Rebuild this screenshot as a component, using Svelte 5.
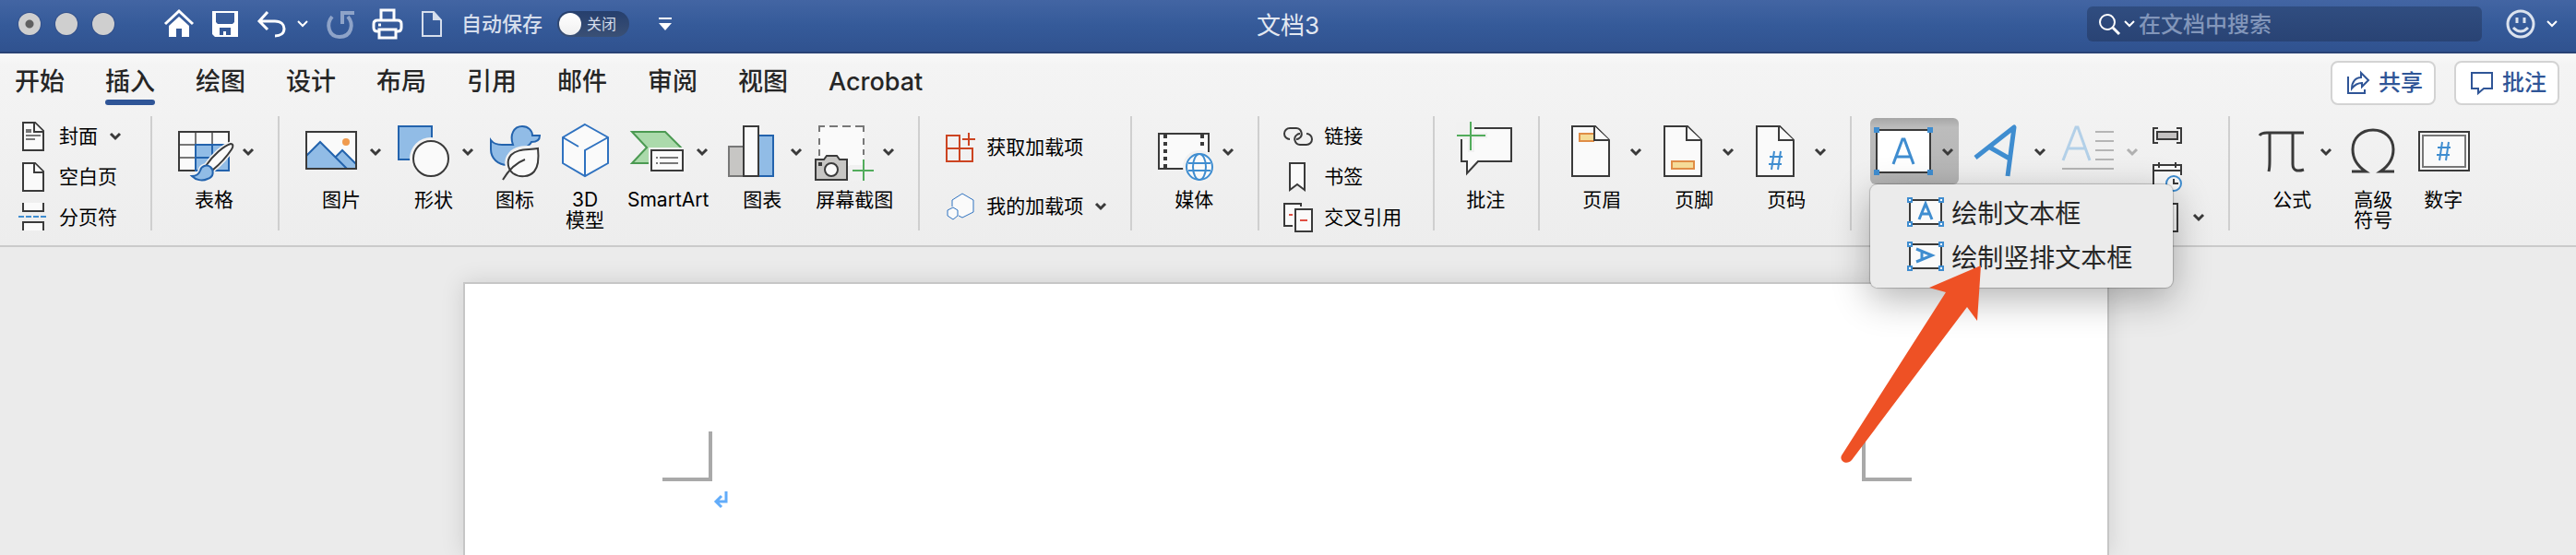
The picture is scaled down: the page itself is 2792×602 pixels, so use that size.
<script module lang="ts">
	type IconName = keyof typeof ICONS;

	interface Command {
		icon: IconName;
		/** One entry per line of the caption. */
		label: string[];
		menu?: boolean;
	}

	interface Group {
		kind: 'large' | 'rows';
		items: Command[];
	}

	const PAGE = '<path class="k w" d="M5 1H18L27 10V31H5Z"/><path class="k w" d="M17 1V11H27"/>';
	const SHEET =
		'<path class="k w" d="M11 3H36L51 18V57H11Z"/><path class="k w" d="M35 3V18H51"/>';

	/* Large icons are drawn on a 64x62 grid, small ones on 32x32. */
	const ICONS = {
		cover: `${PAGE}<path fill="#777" d="M8 8h6v4H8z"/><path class="g" d="M8 15H24M8 19H18"/>`,
		blank: PAGE,
		pagebreak:
			'<path class="k w" d="M5 0V9H27V0M5 30V21H27V30"/><path d="M0 15H30" stroke="#3f8dd0" stroke-width="2" stroke-dasharray="6 2"/>',
		table:
			'<path class="k w" d="M5 9H59V51H5Z"/><path class="g" d="M23 10V50M41 10V50M6 23H58M6 37H58"/><path class="b bf" d="M23 23H59V51H23ZM41 23V51M23 37H59"/>' +
			'<path class="halo" d="M34 46C42 34 54 24 61 22C64 22 64 25 62 28C56 37 48 45 42 50ZM19 57C25 57 27 54 28 51C29 46 35 44 39 47C43 51 43 58 36 60C30 63 23 61 19 57Z"/>' +
			'<path class="k w" d="M34 46C42 34 54 24 61 22C64 22 64 25 62 28C56 37 48 45 42 50Z"/><path class="b bf" d="M19 57C25 57 27 54 28 51C29 46 35 44 39 47C43 51 43 58 36 60C30 63 23 61 19 57Z"/>',
		picture:
			'<path class="w" d="M5 9H59V49H5Z"/><path class="bf" d="M5 35L20 20L37 36L44 30L59 44V49H5Z"/><path class="b" d="M5 35L20 20L49 49M37 36L44 29L59 44"/><circle cx="48" cy="20" r="4" fill="#f09b4e"/><path class="k" d="M5 9H59V49H5Z"/>',
		shapes:
			'<path class="b bf" d="M5 3H41V39H5Z"/><circle cx="40" cy="38" r="23" fill="#f1f1f1"/><circle class="k w" cx="40" cy="38" r="19"/>',
		icons:
			'<path class="b bf" d="M6 18C9 22 13 23 18 23H30C26 12 31 3 40 3C47 3 51 8 51 13H59C59 18 55 20 50 20C48 24 44 26 40 29L24 45C14 45 6 38 6 28Z"/>' +
			'<path d="M57 27C46 28 35 26 28 34C22 41 25 50 30 54C37 60 48 58 53 52C58 46 58 36 57 27Z" fill="#f1f1f1" stroke="#f1f1f1" stroke-width="7"/>' +
			'<path class="k w" d="M57 27C46 29 35 27 28 34C22 41 25 50 30 54C37 59 48 58 53 52C58 46 58 36 57 27Z"/><path class="k" d="M19 61C25 51 32 43 43 39"/>',
		cube: '<path class="c w" d="M32 1L57 15V43L32 57L8 43V15Z"/><path class="c" d="M8 15L25 25M57 15L32 29V57"/>',
		smartart:
			'<path fill="#abdaab" stroke="#4b9a52" stroke-width="2" d="M4 9H40L57 26L40 43H4L20 26Z"/><path fill="#f1f1f1" d="M22 26H64V55H22Z"/><path class="k w" d="M25 29H59V51H25Z"/><path class="g" d="M30 37H32M34 37H54M30 43H32M34 43H54"/>',
		chart:
			'<path fill="#c7c6c4" stroke="#777" stroke-width="2" d="M7 25H23V57H7Z"/><path class="b bf" d="M39 13H55V57H39Z"/><path class="k w" d="M23 3H39V57H23Z"/>',
		screenshot:
			'<path class="w" d="M5 3H53V46H5Z"/><path class="g" d="M4 3H11M16 3H25M30 3H39M44 3H54M5 3V9M5 16V23M5 28V35M53 3V9M53 16V23M53 28V34"/>' +
			'<path fill="#f1f1f1" d="M38 45H60V62H38Z"/><path class="k" style="fill:#c7c6c4" d="M1 39H10L13 35H24L27 39H35V61H1Z"/><circle class="k w" cx="18" cy="50" r="7"/><path fill="#3a3a3a" d="M4 42h4v4H4z"/><path class="gr" d="M53 39V62M41 51H64"/>',
		getaddin:
			'<path fill="none" stroke="#cc4421" stroke-width="2" d="M1 3H15V31H1ZM1 17H29V31H1M25 0V14M18 7H32"/>',
		myaddin:
			'<path class="c w thin" d="M7 16V9L18 2L30 9V22L18 28L14 26"/><path class="c w thin" d="M8 17L13 20V26L8 30L2 26V20Z"/>',
		media:
			'<path class="w" d="M5 11H59V49H5Z"/><path class="k" d="M32 49H5V11H59V31"/><path d="M12 12V49" stroke="#3a3a3a" stroke-width="4" stroke-dasharray="4 4"/><path d="M52 12V24" stroke="#3a3a3a" stroke-width="4" stroke-dasharray="4 4"/>' +
			'<circle cx="49" cy="47" r="18" fill="#f1f1f1"/><g fill="none" stroke="#3f8dd0" stroke-width="2"><circle class="w" cx="49" cy="47" r="14"/><ellipse cx="49" cy="47" rx="7" ry="14"/><path d="M37 43H61M37 51H61"/></g>',
		link: '<path class="k" d="M7 19A6 6 0 0 1 7 7H14A6 6 0 0 1 17 18Q16 19 14 19"/><path class="k" d="M25 13A6 6 0 0 1 25 25H18A6 6 0 0 1 15 14Q16 13 18 13"/>',
		bookmark: '<path class="k w" d="M7 1H23V30L15 24L7 30Z"/>',
		crossref:
			'<path class="k w" d="M10 25H1V1H19V4"/><path class="k w" d="M13 7H31V31H13Z"/><path d="M6 13H10M18 19H26" stroke="#e04f43" stroke-width="2"/>',
		comment:
			'<path class="w" d="M6 5H60V41H24L12 54V41H6Z"/><path fill="#f1f1f1" d="M0 -2H20V10H34V16H20V31H13V17H0Z"/><path class="k" d="M20 5H60V41H24L12 54V41H6V17"/><path class="gr" d="M16 -2V29M1 13H32"/>',
		header: `${SHEET}<path fill="#f5dc98" stroke="#e08d46" stroke-width="2" d="M35 11H19V19H35"/><path class="k w" d="M35 3V18H51"/>`,
		footer: `${SHEET}<path fill="#f5dc98" stroke="#e08d46" stroke-width="2" d="M19 41H43V49H19Z"/>`,
		number: `${SHEET}<path class="n" d="M30 30L27 50M37 30L34 50M25 36H39M24 44H38"/>`,
		textbox:
			'<path class="k" style="fill:#fff" d="M3 7H61V53H3Z"/><path fill="#3f8dd0" d="M0 4h6v6H0zM58 4h6v6h-6zM0 50h6v6H0zM58 50h6v6h-6z"/><path fill="none" stroke="#3f8dd0" stroke-width="3" d="M21 44L31 17H33L43 44M25 36H39"/>',
		wordart:
			'<path fill="none" stroke="#3f8dd0" stroke-width="5" stroke-linejoin="round" d="M10 37L52 4L45 57M26 26L47 38"/>',
		dropcap:
			'<path fill="none" stroke="#b3d0e8" stroke-width="3" d="M5 40L19 4H21L34 40M10 27H29"/><path stroke="#b5b5b5" stroke-width="2" d="M40 9H60M40 19H60M40 29H60M40 39H60M4 49H60"/>',
		field:
			'<path class="k" d="M6 7H1V23H6M26 7H31V23H26"/><path class="k" style="fill:#c4c2c2" d="M5 11H27V19H5Z"/>',
		datetime:
			'<path class="k w" d="M1 31V3H31V14M1 9H31M7 0V6M25 0V6"/><circle cx="23" cy="23" r="8" fill="#fafafa" stroke="#3f8dd0" stroke-width="2"/><path class="k" d="M23 18V23H28"/>',
		object: '<path class="k w" d="M5 1H27V31H5Z"/>',
		equation:
			'<path fill="none" stroke="#3a3a3a" stroke-width="3" d="M8 13Q10 10 16 10H56M19 10V40Q19 48 18 52M44 10V44C44 52 50 52 56 50"/>',
		symbol:
			'<path fill="none" stroke="#3a3a3a" stroke-width="3" d="M9 52H24C15 46 10 38 10 28C10 16 19 7 32 7S54 16 54 28C54 38 49 46 40 52H55"/>',
		digit:
			'<path class="k w" d="M6 9H60V51H6Z"/><path class="g" d="M10 13H56V47H10Z"/><path class="n" d="M31 20L28 40M38 20L35 40M26 26H40M25 34H39"/>'
	};

	const TABS = ['开始', '插入', '绘图', '设计', '布局', '引用', '邮件', '审阅', '视图', 'Acrobat'];

	const LEADING: Group[] = [
		{
			kind: 'rows',
			items: [
				{ icon: 'cover', label: ['封面'], menu: true },
				{ icon: 'blank', label: ['空白页'] },
				{ icon: 'pagebreak', label: ['分页符'] }
			]
		},
		{ kind: 'large', items: [{ icon: 'table', label: ['表格'], menu: true }] },
		{
			kind: 'large',
			items: [
				{ icon: 'picture', label: ['图片'], menu: true },
				{ icon: 'shapes', label: ['形状'], menu: true },
				{ icon: 'icons', label: ['图标'] },
				{ icon: 'cube', label: ['3D', '模型'] },
				{ icon: 'smartart', label: ['SmartArt'], menu: true },
				{ icon: 'chart', label: ['图表'], menu: true },
				{ icon: 'screenshot', label: ['屏幕截图'], menu: true }
			]
		},
		{
			kind: 'rows',
			items: [
				{ icon: 'getaddin', label: ['获取加载项'] },
				{ icon: 'myaddin', label: ['我的加载项'], menu: true }
			]
		},
		{ kind: 'large', items: [{ icon: 'media', label: ['媒体'], menu: true }] },
		{
			kind: 'rows',
			items: [
				{ icon: 'link', label: ['链接'] },
				{ icon: 'bookmark', label: ['书签'] },
				{ icon: 'crossref', label: ['交叉引用'] }
			]
		},
		{ kind: 'large', items: [{ icon: 'comment', label: ['批注'] }] },
		{
			kind: 'large',
			items: [
				{ icon: 'header', label: ['页眉'], menu: true },
				{ icon: 'footer', label: ['页脚'], menu: true },
				{ icon: 'number', label: ['页码'], menu: true }
			]
		}
	];

	const TRAILING: Group = {
		kind: 'large',
		items: [
			{ icon: 'equation', label: ['公式'], menu: true },
			{ icon: 'symbol', label: ['高级', '符号'] },
			{ icon: 'digit', label: ['数字'] }
		]
	};
</script>

<script lang="ts">
	let activeTab = $state('插入');
	let menuOpen = $state(true);
	let autosave = $state(false);
	let query = $state('');
</script>

{#snippet chevron()}
	<svg class="chevron" viewBox="0 0 12 8" aria-hidden="true"><path d="M1 1L6 6L11 1" /></svg>
{/snippet}

{#snippet command(item: Command, kind: Group['kind'])}
	<button class={kind === 'large' ? 'large' : 'row'} class:plain={!item.menu}>
		{#if kind === 'large'}
			<span class="face">
				<svg class="icon" viewBox="0 0 64 62" aria-hidden="true">{@html ICONS[item.icon]}</svg>
				{#if item.menu}{@render chevron()}{/if}
			</span>
			<span class="caption">
				{#each item.label as line (line)}<span>{line}</span>{/each}
			</span>
		{:else}
			<svg class="icon small" viewBox="0 0 32 32" aria-hidden="true">{@html ICONS[item.icon]}</svg>
			<span>{item.label[0]}</span>
			{#if item.menu}{@render chevron()}{/if}
		{/if}
	</button>
{/snippet}

{#snippet iconButton(icon: IconName, name: string, menu: boolean, disabled: boolean)}
	<button class="large" aria-label={name} {disabled}>
		<span class="face">
			<svg class="icon" viewBox="0 0 64 62" aria-hidden="true">{@html ICONS[icon]}</svg>
			{#if menu}{@render chevron()}{/if}
		</span>
	</button>
{/snippet}

<div class="window">
	<header class="titlebar">
		<div class="quick">
			<div class="lights">
				<button class="light edited" aria-label="关闭窗口"></button>
				<button class="light" aria-label="最小化"></button>
				<button class="light" aria-label="缩放"></button>
			</div>
			<button class="tool" aria-label="主页">
				<svg width="32" height="32" viewBox="0 0 32 32">
					<path d="M1 16L16 2L31 16" fill="none" stroke="#fff" stroke-width="3" />
					<path d="M16 8L27 18V30H19V21H13V30H5V18Z" fill="#fff" />
				</svg>
			</button>
			<button class="tool" aria-label="保存">
				<svg width="28" height="32" viewBox="0 0 28 32">
					<path d="M0 2H28V30H3L0 27ZM4 4V14L6 16H22L24 14V4ZM8 20V28H12V24H15V28H20V20Z" fill="#fff" fill-rule="evenodd" />
				</svg>
			</button>
			<button class="tool undo" aria-label="撤销">
				<svg width="32" height="32" viewBox="0 0 32 32" fill="none" stroke="#fff" stroke-width="3">
					<path d="M12 3L3 13L12 22M3 13H20C27 13 30 17 30 21C30 26 26 29 20 29" />
				</svg>
				{@render chevron()}
			</button>
			<button class="tool" aria-label="重做" disabled>
				<svg width="30" height="32" viewBox="0 0 30 32" fill="none" stroke="#8ea3c8" stroke-width="4">
					<path d="M6 8C-1 16 2 30 14 30C27 30 30 16 23 8M17 16V4H30" />
				</svg>
			</button>
			<button class="tool" aria-label="打印">
				<svg width="32" height="32" viewBox="0 0 32 32" fill="none" stroke="#fff" stroke-width="3">
					<path d="M9 12V1H23V12" />
					<path d="M7 24H5Q1 24 1 20V16Q1 12 5 12H27Q31 12 31 16V20Q31 24 27 24H25" />
					<path d="M7 22V31H25V22Z" />
					<path d="M6 17H9" />
				</svg>
			</button>
			<button class="tool" aria-label="新建">
				<svg width="24" height="32" viewBox="0 0 24 32">
					<path d="M2 3H14L22 12V29H2Z" fill="none" stroke="#d6deec" stroke-width="2" />
					<path d="M13 2L23 12H13Z" fill="#d6deec" />
				</svg>
			</button>
			<label class="autosave">
				<span>自动保存</span>
				<input type="checkbox" role="switch" bind:checked={autosave} />
				<span class="switch"><span class="knob"></span>{autosave ? '打开' : '关闭'}</span>
			</label>
			<button class="tool customize" aria-label="自定义工具栏">
				<svg width="14" height="14" viewBox="0 0 14 14" fill="#fff">
					<path d="M0 0H14V2H0ZM0 6H14L7 14Z" />
				</svg>
			</button>
		</div>

		<h1>文档3</h1>

		<div class="tools-end">
			<label class="search">
				<svg width="24" height="24" viewBox="0 0 24 24" fill="none" stroke="#fff" stroke-width="2">
					<circle cx="10" cy="10" r="8" />
					<path d="M16 16L23 23" stroke-width="3" />
				</svg>
				{@render chevron()}
				<input type="search" placeholder="在文档中搜索" aria-label="在文档中搜索" bind:value={query} />
			</label>
			<button class="tool feedback" aria-label="反馈">
				<svg width="32" height="32" viewBox="0 0 32 32" fill="none" stroke="#dbe2ee" stroke-width="3">
					<circle cx="16" cy="16" r="14" />
					<path d="M12 9V15M20 9V15M8 20Q16 28 24 20" />
				</svg>
				{@render chevron()}
			</button>
		</div>
	</header>

	<section class="ribbon">
		<div class="tabrow">
			<nav class="tabs">
				{#each TABS as tab (tab)}
					<button class="tab" class:active={tab === activeTab} onclick={() => (activeTab = tab)}>
						<span>{tab}</span>
					</button>
				{/each}
			</nav>
			<button class="action">
				<svg width="24" height="24" viewBox="0 0 24 24" fill="none" stroke="#2f5597" stroke-width="2">
					<path d="M1 5V23H19V19M15 1L23 9L16 16V12C11 12 8 14 5 18C5 11 9 6 15 6Z" />
				</svg>
				共享
			</button>
			<button class="action">
				<svg width="24" height="24" viewBox="0 0 24 24" fill="none" stroke="#2f5597" stroke-width="2">
					<path d="M1 1H23V18H14L8 23V18H1Z" />
				</svg>
				批注
			</button>
		</div>

		<div class="groups">
			{#each LEADING as group, i (i)}
				<div class="group {group.kind}-group">
					{#each group.items as item (item.icon)}
						{@render command(item, group.kind)}
					{/each}
				</div>
			{/each}

			<div class="group large-group">
				<div class="dropdown">
					<button
						class="large pressed"
						aria-label="文本框"
						aria-expanded={menuOpen}
						onclick={() => (menuOpen = !menuOpen)}
					>
						<span class="face">
							<svg class="icon" viewBox="0 0 64 62" aria-hidden="true">{@html ICONS.textbox}</svg>
							{@render chevron()}
						</span>
					</button>
					{#if menuOpen}
						<div class="menu" role="menu">
							{#each ['绘制文本框', '绘制竖排文本框'] as entry, i (entry)}
								<button class="entry" role="menuitem">
									<svg width="40" height="32" viewBox="0 0 40 32" fill="none" stroke-width="2">
										<path d="M3 3H37V29H3Z" fill="#fafafa" stroke="#3a3a3a" />
										<path d="M1 1h4v4H1zM35 1h4v4h-4zM1 27h4v4H1zM35 27h4v4h-4z" fill="#fff" stroke="#3f8dd0" />
										{#if i === 0}
											<path d="M13 24L20 7L27 24M15 18H25" stroke="#3f8dd0" stroke-width="3" />
										{:else}
											<path d="M10 8L27 15L10 22M16 11V20" stroke="#3f8dd0" stroke-width="3" />
										{/if}
									</svg>
									<span>{entry}</span>
								</button>
							{/each}
						</div>
						<!-- Callout pointing at the vertical text box entry. -->
						<svg class="pointer" width="154" height="216" viewBox="0 0 154 216" aria-hidden="true">
							<path d="M152 0L96 24L114 29L1 206C-2 212 7 217 12 211L137 45L148 60Z" fill="#ee5125" />
						</svg>
					{/if}
				</div>
				{@render iconButton('wordart', '艺术字', true, false)}
				{@render iconButton('dropcap', '首字下沉', true, true)}
				<div class="stack">
					<button class="row" aria-label="域">
						<svg class="icon small" viewBox="0 0 32 32">{@html ICONS.field}</svg>
					</button>
					<button class="row" aria-label="日期和时间">
						<svg class="icon small" viewBox="0 0 32 32">{@html ICONS.datetime}</svg>
					</button>
					<button class="row" aria-label="对象">
						<svg class="icon small" viewBox="0 0 32 32">{@html ICONS.object}</svg>
						{@render chevron()}
					</button>
				</div>
			</div>

			<div class="group large-group">
				{#each TRAILING.items as item (item.icon)}
					{@render command(item, 'large')}
				{/each}
			</div>
		</div>
	</section>

	<main class="canvas">
		<article class="sheet">
			<div class="margins"><i class="crop left"></i><i class="crop right"></i></div>
			<p>
				<svg width="16" height="20" viewBox="0 0 16 20" fill="none" stroke="#62acfa" stroke-width="3">
					<path d="M13 1V12H2M8 6L2 12L8 18" />
				</svg>
			</p>
		</article>
	</main>
</div>

<style>
	:global(body) {
		background: #ebebeb;
	}

	.window {
		display: flex;
		flex-direction: column;
		min-height: 100vh;
		font-family: Inter, 'Noto Sans CJK SC', sans-serif;
		font-size: 21px;
		line-height: 22px;
		color: #000;
	}
	button {
		padding: 0;
		border: 0;
		background: none;
		font: inherit;
		color: inherit;
		white-space: nowrap;
	}
	svg {
		display: block;
		flex: none;
		overflow: visible;
	}
	.chevron {
		width: 12px;
		height: 8px;
		fill: none;
		stroke: #3a3a3a;
		stroke-width: 3;
	}

	/* Title bar */
	.titlebar {
		display: grid;
		grid-template-columns: 1fr auto 1fr;
		align-items: center;
		height: 56px;
		padding: 0 20px;
		border-bottom: 2px solid #2a4376;
		background: linear-gradient(#4365a3, #355a99 50%, #30528f);
	}
	.titlebar .chevron {
		stroke: #fff;
		stroke-width: 2;
	}
	.quick,
	.tools-end,
	.lights,
	.tool {
		display: flex;
		align-items: center;
	}
	.quick {
		gap: 20px;
		padding-bottom: 4px;
	}
	.lights {
		gap: 16px;
		margin-right: 34px;
	}
	.light {
		width: 24px;
		height: 24px;
		border-radius: 50%;
		background: #cfcfcf;
		box-shadow: 0 0 0 1px #33508a;
	}
	.light.edited {
		background: radial-gradient(circle, #606060 4px, #cfcfcf 5px);
	}
	.undo {
		gap: 12px;
	}
	.autosave {
		display: flex;
		align-items: center;
		gap: 16px;
		font-size: 22px;
		font-weight: 500;
		color: #d6deec;
	}
	.autosave input {
		position: absolute;
		opacity: 0;
	}
	.switch {
		display: flex;
		align-items: center;
		gap: 6px;
		box-sizing: border-box;
		width: 78px;
		height: 28px;
		padding: 0 2px;
		border-radius: 14px;
		background: linear-gradient(#263f6d, #3a5075);
		font-size: 16px;
		font-weight: 400;
	}
	.knob {
		width: 24px;
		height: 24px;
		border-radius: 50%;
		background: linear-gradient(#fff, #f0f0f0);
	}
	.customize {
		margin-left: 12px;
	}
	h1 {
		margin: 0;
		font-size: 26px;
		font-weight: 400;
		line-height: 32px;
		color: #e3e8f1;
	}
	.tools-end {
		justify-content: flex-end;
		gap: 26px;
		padding-bottom: 4px;
	}
	.search {
		display: flex;
		align-items: center;
		gap: 4px;
		box-sizing: border-box;
		width: 428px;
		height: 38px;
		padding: 0 12px;
		border-radius: 6px;
		background: linear-gradient(#304d80, #294374);
	}
	.search input {
		flex: 1;
		min-width: 0;
		padding: 2px 0 0;
		border: 0;
		outline: 0;
		background: none;
		font: inherit;
		font-size: 24px;
		line-height: 32px;
		color: #fff;
	}
	.search input::placeholder {
		color: #8296ba;
		font-weight: 500;
		opacity: 1;
	}
	.feedback {
		gap: 12px;
	}

	/* Ribbon */
	.ribbon {
		padding-top: 8px;
		border-bottom: 2px solid #cacaca;
		background: linear-gradient(#f9f9f9, #f4f4f4 12px, #ededed);
	}
	.tabrow {
		display: flex;
		gap: 20px;
		padding: 0 18px 12px 16px;
	}
	.tabs {
		display: flex;
		flex: 1;
		gap: 44px;
	}
	.tab {
		display: flex;
		flex-direction: column;
		padding-top: 2px;
		font-size: 27px;
		font-weight: 500;
		line-height: 40px;
		color: #262626;
	}
	.tab span {
		padding-top: 2px;
		line-height: 38px;
	}
	.tab.active::after {
		content: '';
		width: 100%;
		height: 6px;
		border-radius: 3px;
		background: #2f5597;
	}
	.action {
		display: flex;
		align-items: center;
		gap: 10px;
		box-sizing: border-box;
		width: 114px;
		height: 48px;
		padding-left: 16px;
		border: 2px solid #d3d3d3;
		border-radius: 8px;
		background: #fff;
		font-size: 24px;
		font-weight: 500;
		color: #2f5597;
	}
	.groups {
		display: flex;
		height: 140px;
	}
	.group {
		display: flex;
		flex: none;
		box-sizing: border-box;
	}
	/* Divider is shorter than the band, so it is painted rather than bordered. */
	.group:not(:last-child) {
		padding-right: 2px;
		background: linear-gradient(#cfcfcf, #cfcfcf) right top / 2px 124px no-repeat;
	}
	.large-group {
		gap: 14px;
		padding-left: 24px;
	}
	.large-group:not(:last-child) {
		padding-right: 28px;
	}
	.rows-group {
		flex-direction: column;
		gap: 12px;
		padding: 6px 36px 0 26px;
	}
	.rows-group:not(:last-child) {
		padding-right: 36px;
	}
	.rows-group:first-child {
		padding-left: 20px;
		padding-right: 34px;
	}
	.rows-group:nth-child(4) {
		gap: 32px;
		padding-top: 18px;
		padding-left: 28px;
		padding-right: 28px;
	}
	.large {
		display: flex;
		flex-direction: column;
		align-items: center;
		gap: 10px;
		padding-top: 8px;
	}
	.large.plain {
		width: 62px;
	}
	.face {
		display: flex;
		align-items: center;
		gap: 10px;
	}
	.caption {
		display: flex;
		flex-direction: column;
		align-items: center;
		padding: 0 1px;
	}
	.row {
		display: flex;
		align-items: center;
		gap: 12px;
		height: 32px;
	}
	.row span + .chevron {
		margin-left: 1px;
	}
	.icon {
		width: 64px;
		height: 62px;
	}
	.icon.small {
		width: 32px;
		height: 32px;
	}
	.large:disabled .chevron {
		opacity: 0.35;
	}
	.stack {
		display: flex;
		flex-direction: column;
		gap: 12px;
		padding: 6px 0 0 2px;
	}

	/* Shared pens and fills of the icon artwork */
	.icon :global(path),
	.icon :global(circle) {
		stroke-miterlimit: 10;
	}
	.icon :global(.k),
	.icon :global(.g),
	.icon :global(.b),
	.icon :global(.c),
	.icon :global(.n),
	.icon :global(.gr) {
		fill: none;
		stroke: #3a3a3a;
		stroke-width: 2;
	}
	.icon :global(.g) {
		stroke: #777;
	}
	.icon :global(.b) {
		stroke: #2363ad;
	}
	.icon :global(.c) {
		stroke: #2f72c0;
	}
	.icon :global(.n) {
		stroke: #3f8dd0;
	}
	.icon :global(.gr) {
		stroke: #52ac5c;
	}
	.icon :global(.thin) {
		stroke-width: 1;
	}
	.icon :global(.w) {
		fill: #fafafa;
	}
	.icon :global(.bf) {
		fill: #91bce6;
	}
	.icon :global(.halo) {
		fill: #f1f1f1;
		stroke: #f1f1f1;
		stroke-width: 5;
	}

	/* Text box drop-down */
	.dropdown {
		position: relative;
	}
	.pressed {
		box-sizing: border-box;
		height: 72px;
		margin: 2px -6px 0 -4px;
		padding: 6px 6px 0 4px;
		border-radius: 6px;
		background: linear-gradient(#a6a6a6, #bcbcbc 10px, #b4b4b4);
	}
	.menu {
		position: absolute;
		z-index: 1;
		top: 74px;
		left: -4px;
		display: flex;
		flex-direction: column;
		box-sizing: border-box;
		width: 328px;
		padding: 6px 0 10px;
		border-radius: 8px;
		background: #ebebeb;
		box-shadow:
			0 0 1px 1px rgba(0, 0, 0, 0.2),
			0 12px 40px rgba(0, 0, 0, 0.3);
	}
	.entry {
		display: flex;
		align-items: center;
		gap: 8px;
		height: 48px;
		padding-left: 40px;
		font-size: 28px;
		line-height: 44px;
		color: #262626;
	}
	.entry span {
		padding-top: 4px;
	}
	.pointer {
		position: absolute;
		z-index: 2;
		top: 162px;
		left: -36px;
		pointer-events: none;
	}

	/* Document */
	.canvas {
		display: flex;
		flex: 1;
		justify-content: center;
		padding: 38px 4px 0 0;
	}
	.sheet {
		box-sizing: border-box;
		width: 1784px;
		padding: 160px 212px 0 214px;
		border: 2px solid #c6c6c6;
		border-bottom: 0;
		background: #fff;
		box-shadow: 0 0 24px rgba(0, 0, 0, 0.12);
	}
	.margins {
		display: flex;
		justify-content: space-between;
	}
	.crop {
		width: 50px;
		height: 50px;
		border: 0 solid #a9a9a9;
		border-bottom-width: 4px;
	}
	.crop.left {
		border-right-width: 4px;
	}
	.crop.right {
		border-left-width: 4px;
	}
	.sheet p {
		margin: 0;
		padding: 10px 56px;
	}
</style>
